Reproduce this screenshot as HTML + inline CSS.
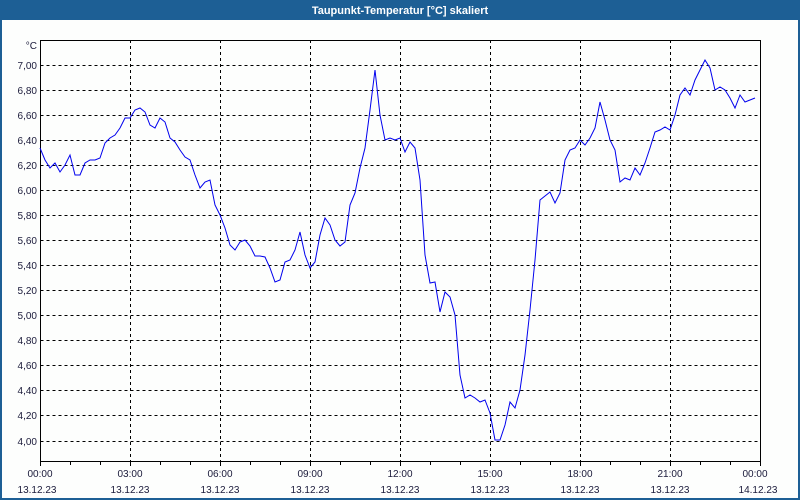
<!DOCTYPE html>
<html><head><meta charset="utf-8"><style>
html,body{margin:0;padding:0;width:800px;height:500px;overflow:hidden;background:#fff}
svg{display:block;font-family:"Liberation Sans",Tahoma,sans-serif}
</style></head><body>
<svg width="800" height="500" viewBox="0 0 800 500" xmlns="http://www.w3.org/2000/svg">
<rect x="0" y="0" width="800" height="500" fill="#1d5f95"/>
<rect x="2" y="20" width="796" height="478" fill="#fdfefd"/>
<text x="400" y="14" fill="#fff" font-size="11" font-weight="bold" text-anchor="middle">Taupunkt-Temperatur [°C] skaliert</text>
<g stroke="#000" stroke-width="1" stroke-dasharray="3,3" fill="none">
<path d="M40.5 65.5H760M40.5 90.5H760M40.5 115.5H760M40.5 140.5H760M40.5 165.5H760M40.5 190.5H760M40.5 215.5H760M40.5 240.5H760M40.5 265.5H760M40.5 290.5H760M40.5 315.5H760M40.5 340.5H760M40.5 365.5H760M40.5 390.5H760M40.5 415.5H760M40.5 441.5H760"/>
<path d="M130.5 40V461M220.5 40V461M310.5 40V461M400.5 40V461M490.5 40V461M580.5 40V461M670.5 40V461"/>
</g>
<g stroke="#000" stroke-width="1" fill="none">
<path d="M40.5 40V461.5H760.5V40M40 40.5H760.5"/>
<path d="M70.5 461V465M100.5 461V465M130.5 461V466M160.5 461V465M190.5 461V465M220.5 461V466M250.5 461V465M280.5 461V465M310.5 461V466M340.5 461V465M370.5 461V465M400.5 461V466M430.5 461V465M460.5 461V465M490.5 461V466M520.5 461V465M550.5 461V465M580.5 461V466M610.5 461V465M640.5 461V465M670.5 461V466M700.5 461V465M730.5 461V465M760.5 461V466M40.5 461V466"/>
</g>
<g font-size="10" fill="#1a1a3a" text-anchor="end">
<text x="37" y="49">°C</text>
<text x="37" y="69">7,00</text><text x="37" y="94">6,80</text><text x="37" y="119">6,60</text><text x="37" y="144">6,40</text><text x="37" y="169">6,20</text><text x="37" y="194">6,00</text><text x="37" y="219">5,80</text><text x="37" y="244">5,60</text><text x="37" y="269">5,40</text><text x="37" y="294">5,20</text><text x="37" y="319">5,00</text><text x="37" y="344">4,80</text><text x="37" y="369">4,60</text><text x="37" y="394">4,40</text><text x="37" y="419">4,20</text><text x="37" y="445">4,00</text>
</g>
<g font-size="10" fill="#1a1a3a" text-anchor="middle">
<text x="40" y="477">00:00</text><text x="130" y="477">03:00</text><text x="220" y="477">06:00</text><text x="310" y="477">09:00</text><text x="400" y="477">12:00</text><text x="490" y="477">15:00</text><text x="580" y="477">18:00</text><text x="670" y="477">21:00</text><text x="755" y="477">00:00</text>
<text x="37" y="493">13.12.23</text><text x="130" y="493">13.12.23</text><text x="220" y="493">13.12.23</text><text x="310" y="493">13.12.23</text><text x="400" y="493">13.12.23</text><text x="490" y="493">13.12.23</text><text x="580" y="493">13.12.23</text><text x="670" y="493">13.12.23</text><text x="758" y="493">14.12.23</text>
</g>
<polyline fill="none" stroke="#0000ee" stroke-width="1" points="40,148 45,160 50,168 55,163 60,172 65,165 70,155 75,175 80,175 85,163 90,160 95,160 100,158 105,143 110,138 115,135 120,128 125,118 130,118 135,110 140,108 145,112 150,125 155,128 160,118 165,122 170,138 175,142 180,150 185,157 190,160 195,175 200,188 205,182 210,180 215,205 220,215 225,228 230,245 235,250 240,242 245,240 250,246 255,256 260,256 265,257 270,268 275,282 280,280 285,262 290,260 295,250 300,232 305,255 310,268 315,262 320,235 325,218 330,225 335,240 340,246 345,242 350,205 355,193 360,168 365,148 370,110 375,70 380,115 385,140 390,138 395,140 400,138 405,152 410,142 415,148 420,180 425,255 430,283 435,282 440,312 445,292 450,297 455,315 460,375 465,398 470,395 475,398 480,402 485,400 490,413 495,440 500,440 505,425 510,402 515,408 520,390 525,355 530,310 535,260 540,200 545,196 550,192 555,203 560,193 565,160 570,150 575,148 580,140 585,145 590,138 595,128 600,102 605,120 610,140 615,150 620,182 625,178 630,180 635,168 640,175 645,163 650,148 655,132 660,130 665,127 670,130 675,115 680,95 685,88 690,95 695,80 700,70 705,60 710,68 715,90 720,87 725,90 730,98 735,108 740,95 745,102 750,100 755,98"/>
</svg>
</body></html>
